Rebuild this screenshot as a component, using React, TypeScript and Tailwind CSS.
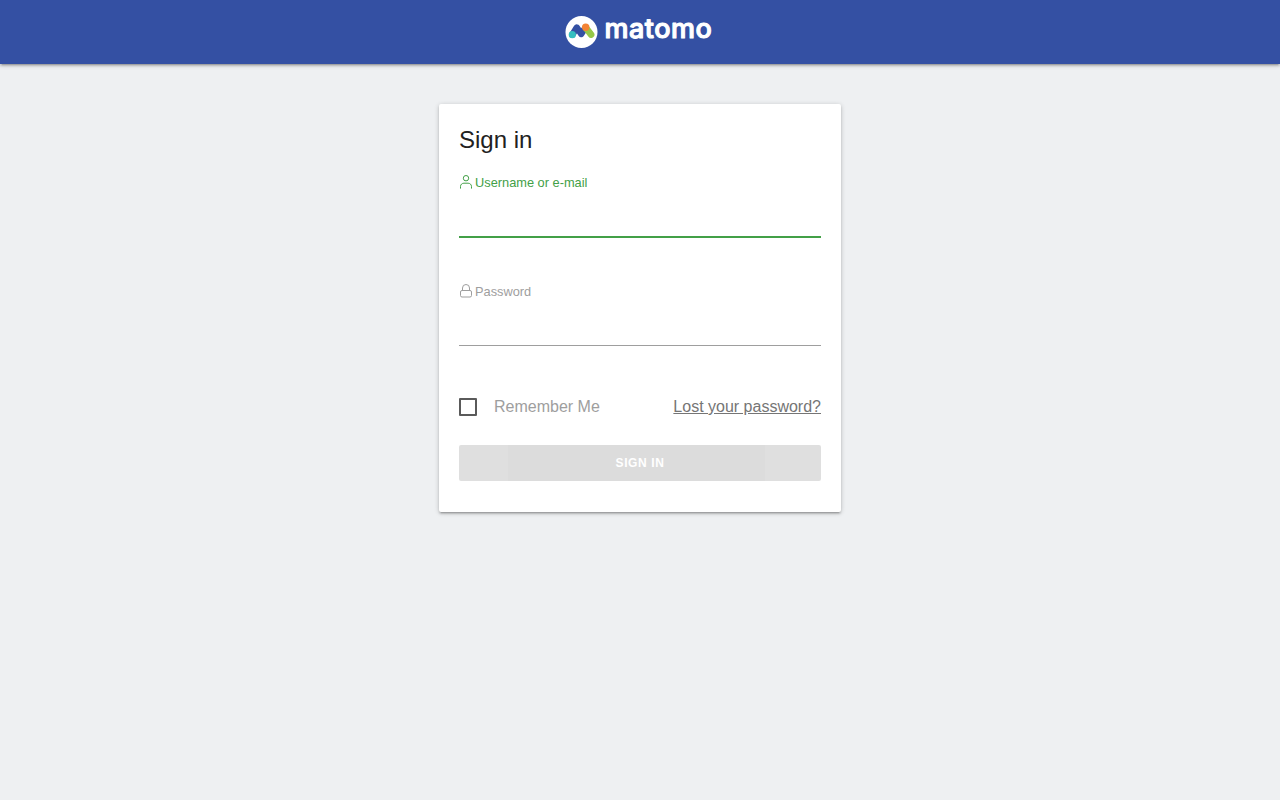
import React from "react";

const sans = "font-['Liberation_Sans',Arial,sans-serif]";
const depth = "shadow-[0_2px_2px_0_rgba(0,0,0,0.14),0_3px_1px_-2px_rgba(0,0,0,0.12),0_1px_5px_0_rgba(0,0,0,0.2)]";

function UserIcon() {
  return (
    <svg width="14" height="14" viewBox="0 0 14 14" fill="none" stroke="#43a047" strokeWidth="1" className="mr-[2px] mb-[2px] shrink-0">
      <circle cx="7" cy="3.2" r="2.7" />
      <path d="M1.5 13.2v-1.7c0-2 1.6-3.3 3.4-3.3h4.2c1.8 0 3.4 1.3 3.4 3.3v1.7" strokeLinecap="round" />
    </svg>
  );
}

function LockIcon() {
  return (
    <svg width="14" height="14" viewBox="0 0 14 14" fill="none" stroke="#9e9e9e" strokeWidth="1" className="mr-[2px] mb-[2px] shrink-0">
      <rect x="1.5" y="6.5" width="11" height="6.5" rx="1.5" />
      <path d="M3.5 6.5V4a3.5 3.5 0 0 1 7 0v2.5" />
    </svg>
  );
}

function Logo() {
  return (
    <svg width="150" height="33" viewBox="0 0 150 33" className="shrink-0">
      <circle cx="16.5" cy="16" r="16" fill="#fff" />
      <path d="M7.3 18.7 L11.8 11.5 L16.2 18 L20.7 11.3" fill="none" stroke="#3450a3" strokeWidth="6.4" strokeLinecap="round" strokeLinejoin="round" />
      <path d="M21 12 L26 18.5" fill="none" stroke="#95c748" strokeWidth="6.8" strokeLinecap="round" />
      <circle cx="20.7" cy="11.3" r="3.7" fill="#f38334" />
      <circle cx="7.3" cy="18.7" r="3.6" fill="#35bfc0" />
      <text
        x="39.5"
        y="22"
        fill="#fff"
        stroke="#fff"
        strokeWidth="1.1"
        strokeLinejoin="round"
        fontFamily="Inter, sans-serif"
        fontSize="27"
        fontWeight="500"
        letterSpacing="0.5"
      >
        matomo
      </text>
    </svg>
  );
}

export default function App() {
  return (
    <div className={`min-h-[800px] bg-[#eef0f2] ${sans}`}>
      <header className={`flex h-16 items-center justify-center bg-[#3450a3] ${depth}`}>
        <Logo />
      </header>
      <main className="flex justify-center pt-10">
        <div className={`h-[408px] w-[402px] rounded-[2px] bg-white px-5 pt-5 ${depth}`}>
          <h2 className="text-2xl leading-8 text-[#212121]">Sign in</h2>
          <div className="mt-[19px] flex h-4 items-center text-[12.8px] text-[#43a047]">
            <UserIcon />
            <span>Username or e-mail</span>
          </div>
          <div className="mt-[45px] h-[2px] bg-[#43a047]" />
          <div className="mt-[46px] flex h-4 items-center text-[12.8px] text-[#9e9e9e]">
            <LockIcon />
            <span>Password</span>
          </div>
          <div className="mt-[45px] h-px bg-[#9e9e9e]" />
          <div className="mt-[52px] flex h-[18px] items-center justify-between">
            <label className="flex items-center">
              <span className="h-[18px] w-[18px] rounded-[1px] border-2 border-[#5a5a5a]" />
              <span className="ml-[17px] text-base text-[#9e9e9e]">Remember Me</span>
            </label>
            <a className="text-base text-[#757575] underline">Lost your password?</a>
          </div>
          <button className="mt-[29px] flex h-9 w-full items-center justify-center rounded-[2px] bg-[#dfdfdf] text-xs font-bold tracking-[0.6px] text-white">
            <span className="flex h-full w-[257px] -translate-x-[4px] items-center justify-center bg-[#dcdcdc]">
              <span className="translate-x-[4px]">SIGN IN</span>
            </span>
          </button>
        </div>
      </main>
    </div>
  );
}
